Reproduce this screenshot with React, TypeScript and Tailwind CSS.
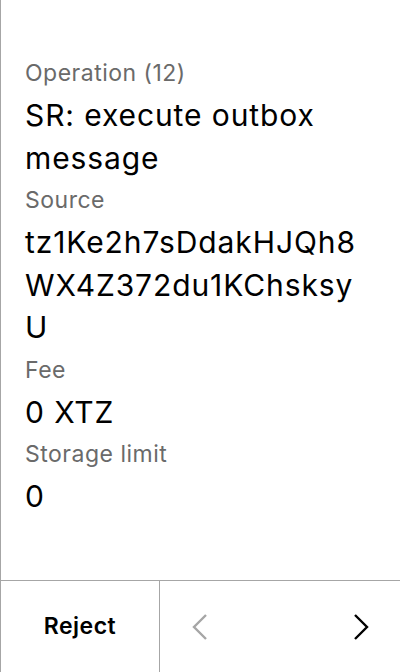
import React from 'react';

const fields = [
  { label: 'Operation (12)', value: 'SR: execute outbox message' },
  { label: 'Source', value: 'tz1Ke2h7sDdakHJQh8WX4Z372du1KChsksyU' },
  { label: 'Fee', value: '0 XTZ' },
  { label: 'Storage limit', value: '0' },
];

const Chevron = ({ dir, color }: { dir: 'left' | 'right'; color: string }) => (
  <svg width="16" height="28" viewBox="0 0 16 28" fill="none">
    <path
      d={dir === 'left' ? 'M14 2 L2 14 L14 26' : 'M2 2 L14 14 L2 26'}
      stroke={color}
      strokeWidth="2.4"
    />
  </svg>
);

export default function App() {
  return (
    <div
      className="w-[400px] h-[672px] bg-white flex flex-col border-l border-[#a6a6a6] text-black"
      style={{ fontFamily: 'Inter, "Noto Sans", sans-serif' }}
    >
      <div className="flex-1 pt-[52px] pl-6 pr-6">
        {fields.map(f => (
          <div key={f.label}>
            <div className="text-[23px] leading-[42px] tracking-[0.5px] text-[#6a6a6a]">{f.label}</div>
            <div className="text-[30px] leading-[42.5px] tracking-[0.9px] [overflow-wrap:anywhere]">
              {f.value}
            </div>
          </div>
        ))}
      </div>
      <div className="h-[92px] border-t border-[#a6a6a6] flex">
        <button className="w-[159px] border-r border-[#a6a6a6] text-[23px] font-semibold tracking-[0.5px]">
          Reject
        </button>
        <div className="flex-1 flex items-center justify-between pl-[32px] pr-[31px]">
          <Chevron dir="left" color="#a6a6a6" />
          <Chevron dir="right" color="#000" />
        </div>
      </div>
    </div>
  );
}
